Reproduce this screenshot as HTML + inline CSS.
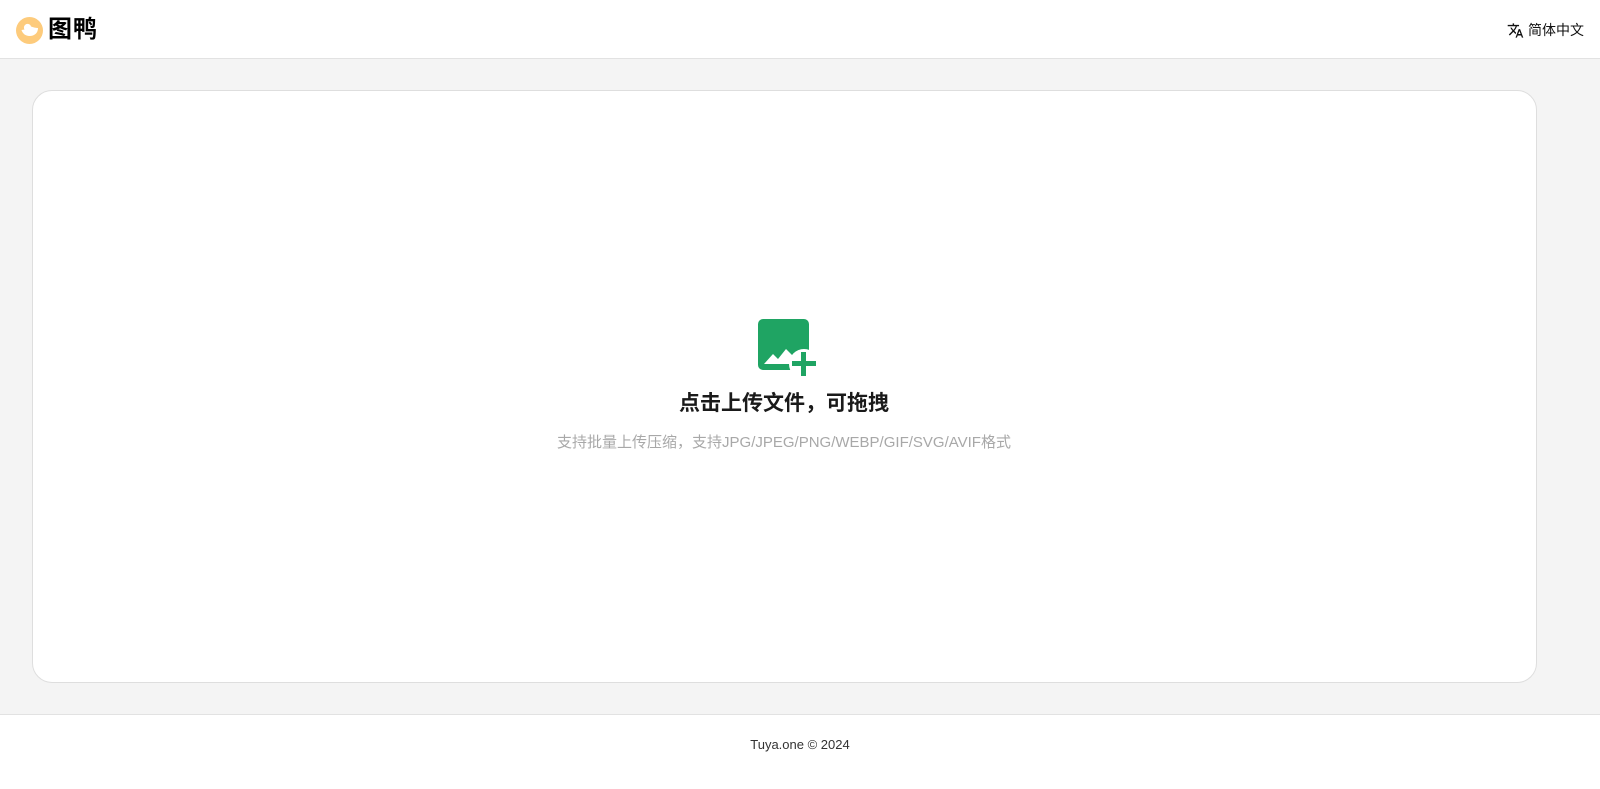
<!DOCTYPE html>
<html><head><meta charset="utf-8"><style>
*{margin:0;padding:0;box-sizing:border-box}
body{width:1600px;height:789px;background:#f4f4f4;font-family:"Liberation Sans","Noto Sans CJK SC",sans-serif;position:relative;overflow:hidden}
.hd{position:absolute;left:0;top:0;width:1600px;height:59px;background:#fff;border-bottom:1px solid #e2e2e2}
.logo{position:absolute;left:16px;top:17px;width:27px;height:27px}
.lt{position:absolute;left:48px;top:14px;font-size:24px;font-weight:bold;color:#000;letter-spacing:1px;line-height:32px}
.lang{position:absolute;right:16px;top:20px;font-size:14px;color:#111;line-height:20px;display:flex;align-items:center;gap:4px}
.card{position:absolute;left:32px;top:90px;width:1505px;height:593px;background:#fff;border:1px solid #dedede;border-radius:20px}
.t1{position:absolute;left:0;width:1568px;top:390px;text-align:center;font-size:21px;font-weight:bold;color:#1a1a1a;line-height:28px}
.t2{position:absolute;left:0;width:1568px;top:432px;text-align:center;font-size:15px;color:#a8a8a8;line-height:22px}
.ft{position:absolute;left:0;top:714px;width:1600px;height:75px;background:#fff;border-top:1px solid #e2e2e2;text-align:center;font-size:13px;color:#333;line-height:60px}
</style></head><body>
<div class="hd">
<svg class="logo" viewBox="0 0 27 27"><circle cx="13.5" cy="13.5" r="13.5" fill="#fdcb7c"/><path d="M9 8a3.5 3.5 0 0 1 6 1.5c2.5 1 5 1.5 7 1.5c0 5-3.5 8-8.5 8c-4 0-7-2.5-8-6l3-0.5a3.5 3.5 0 0 1 0.5-4.5z" fill="#fff"/></svg>
<div class="lt">图鸭</div>
<div class="lang"><svg width="17" height="17" viewBox="0 0 24 24"><path fill="#111" d="M12.87 15.07l-2.540-2.51.03-.03A17.5 17.5 0 0 0 14.07 6H17V4h-7V2H8v2H1v2h11.17C11.5 7.920 10.44 9.75 9 11.35 8.07 10.32 7.3 9.19 6.69 8h-2c.73 1.63 1.73 3.17 2.98 4.56l-5.09 5.02L4 19l5-5 3.11 3.11.76-2.04zM18.5 10h-2L12 22h2l1.12-3h4.75L21 22h2l-4.5-12zm-2.62 7l1.62-4.33L19.12 17h-3.24z"/></svg>简体中文</div>
</div>
<div class="card"></div>
<svg style="position:absolute;left:758px;top:319px" width="60" height="60" viewBox="0 0 60 60">
<rect x="0" y="0" width="51" height="51" rx="5" fill="#1fa463"/>
<path d="M6 45 L15 35 L20 40 L28 30 L36 38 L38 45 Z" fill="#fff"/>
<circle cx="46" cy="45" r="15" fill="#fff"/>
<rect x="43" y="33" width="5" height="24" fill="#1fa463"/>
<rect x="34" y="42" width="24" height="5" fill="#1fa463"/>
</svg>
<div class="t1">点击上传文件，可拖拽</div>
<div class="t2">支持批量上传压缩，支持JPG/JPEG/PNG/WEBP/GIF/SVG/AVIF格式</div>
<div class="ft">Tuya.one © 2024</div>
</body></html>
